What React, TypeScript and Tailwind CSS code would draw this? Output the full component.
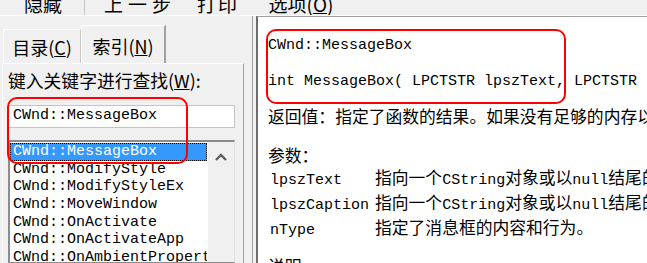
import React from 'react';

const items = [
  'CWnd::MessageBox',
  'CWnd::ModifyStyle',
  'CWnd::ModifyStyleEx',
  'CWnd::MoveWindow',
  'CWnd::OnActivate',
  'CWnd::OnActivateApp',
  'CWnd::OnAmbientProperty',
];

const params = [
  { name: 'lpszText', desc: ['指向一个', 'CString', '对象或以', 'null', '结尾的字符串'] },
  { name: 'lpszCaption', desc: ['指向一个', 'CString', '对象或以', 'null', '结尾的字符串'] },
  { name: 'nType', desc: ['指定了消息框的内容和行为。'] },
];

const Cjk: React.FC<{ children: React.ReactNode }> = ({ children }) => (
  <span className="font-['Noto_Sans_CJK_SC',sans-serif] text-[16.8px]">{children}</span>
);

const Mono: React.FC<{ children: React.ReactNode }> = ({ children }) => (
  <span className="font-['Liberation_Mono','Noto_Sans_CJK_SC',monospace] text-[15px]">{children}</span>
);

export default function App() {
  return (
    <div className="relative w-[647px] h-[263px] overflow-hidden bg-[#f0f0f0] flex flex-col text-black font-['Noto_Sans_CJK_SC',sans-serif]">
      {/* toolbar, only the lower part of its labels shows */}
      <div className="h-[16px] shrink-0 flex border-b border-white overflow-hidden text-[19px] leading-[19px]">
        <div className="w-[85px] border-r border-[#c8c8c8] flex justify-center">
          <span className="-mt-[6px] pl-[2px]">隐藏</span>
        </div>
        <div className="w-[105px] flex justify-center">
          <span className="-mt-[6px] tracking-[5px] pl-[5px]">上一步</span>
        </div>
        <div className="w-[56px] flex justify-center">
          <span className="-mt-[6px] tracking-[2px]">打印</span>
        </div>
        <div className="w-[110px] flex justify-center">
          <span className="-mt-[6px]">
            选项(<span className="underline">O</span>)
          </span>
        </div>
      </div>

      <div className="flex flex-1 min-h-0">
        {/* left navigation */}
        <div className="w-[256px] flex shrink-0">
          <div className="ml-[2px] w-[242px] flex flex-col min-h-0">
            <div className="h-[47px] shrink-0 flex items-end pl-[1px]">
              <div className="w-[78px] h-[34px] border-t border-l border-white border-r border-r-[#c8c8c8] flex items-center justify-center text-[18px] leading-[20px] pt-[1px]">
                目录(<span className="underline">C</span>)
              </div>
              <div className="w-[85px] h-[38px] border-t border-l border-white border-r-2 border-r-[#a0a0a0] flex items-center justify-center text-[18px] leading-[20px] pt-[2px] bg-[#f0f0f0]">
                索引(<span className="underline">N</span>)
              </div>
            </div>
            <div className="flex-1 min-h-0 border-t border-l border-white border-r border-r-[#a0a0a0] pl-[5px] flex flex-col">
              <div className="mt-[7px] h-[18px] shrink-0 text-[17.8px] leading-[18px] whitespace-nowrap">
                键入关键字进行查找(<span className="underline">W</span>):
              </div>
              <div className="mt-[16px] w-[227px] h-[23px] shrink-0 bg-white border border-[#c4c4c4] pl-[4px] flex items-center font-['Liberation_Mono',monospace] text-[15px]">
                CWnd::MessageBox
              </div>
              <div className="mt-[12px] w-[227px] flex-1 min-h-0 overflow-hidden bg-white border-t-2 border-l-2 border-[#8c8c8c] border-r border-b border-r-[#e0e0e0] flex">
                <div className="w-[197px] pt-[1px] overflow-hidden font-['Liberation_Mono',monospace] text-[15px]">
                  {items.map((item, i) => (
                    <div
                      key={item}
                      className={
                        i === 0
                          ? 'h-[17.7px] leading-[16px] pl-[2px] bg-[#3399ff] text-white border border-dotted border-black whitespace-nowrap'
                          : 'h-[17.7px] leading-[17.7px] pl-[3px] whitespace-nowrap'
                      }
                    >
                      {item}
                    </div>
                  ))}
                </div>
                <div className="ml-[1px] flex-1 bg-[#f0f0f0] flex justify-center pt-[11px]">
                  <svg width="12" height="8" viewBox="0 0 12 8">
                    <polyline points="1,7 6,2 11,7" fill="none" stroke="#606060" strokeWidth="2.4" />
                  </svg>
                </div>
              </div>
            </div>
          </div>
          <div className="w-[8px]" />
          <div className="w-px bg-[#a0a0a0]" />
          <div className="w-[3px]" />
        </div>

        {/* topic pane */}
        <div className="flex-1 bg-white border-l-2 border-l-[#6d6d6d] border-t border-t-[#a0a0a0] pl-[10px] flex flex-col whitespace-nowrap overflow-hidden">
          <div className="mt-[15px] h-[20px] shrink-0 leading-[20px]">
            <Mono>CWnd::MessageBox</Mono>
          </div>
          <div className="mt-[16px] h-[20px] shrink-0 leading-[20px]">
            <Mono>int MessageBox( LPCTSTR lpszText, LPCTSTR lpszCaption = NULL, UINT nType = MB_OK );</Mono>
          </div>
          <div className="mt-[17px] h-[22px] shrink-0 leading-[22px]">
            <Cjk>返回值：指定了函数的结果。如果没有足够的内存以完成此操作，返回0。</Cjk>
          </div>
          <div className="mt-[18px] h-[20px] shrink-0 leading-[20px]">
            <Cjk>参数：</Cjk>
          </div>
          {params.map((p) => (
            <div key={p.name} className="h-[25px] shrink-0 leading-[24px] flex pl-[2px]">
              <div className="w-[105px] shrink-0">
                <Mono>{p.name}</Mono>
              </div>
              <div>
                {p.desc.map((part, i) =>
                  /[A-Za-z]/.test(part) ? <Mono key={i}>{part}</Mono> : <Cjk key={i}>{part}</Cjk>
                )}
              </div>
            </div>
          ))}
          <div className="mt-[15px] h-[22px] shrink-0 leading-[22px]">
            <Cjk>说明</Cjk>
          </div>
        </div>
      </div>

      {/* red annotation outlines */}
      <div className="absolute left-[7px] top-[97px] w-[181px] h-[67px] rounded-[10px] border-2 border-[#ff0000]" />
      <div className="absolute left-[266px] top-[29px] w-[300px] h-[75px] rounded-[10px] border-2 border-[#ff0000]" />
    </div>
  );
}
